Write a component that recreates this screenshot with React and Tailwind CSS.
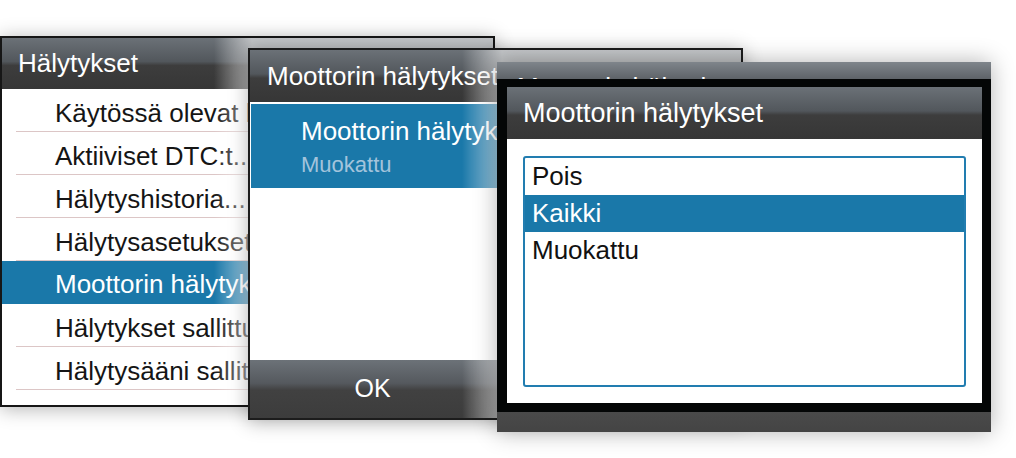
import React from "react";

const HEADER =
  "bg-[linear-gradient(to_bottom,#6b7177_0%,#52575c_46%,#3d3d3d_54%,#363636_100%)]";

const mainRows = [
  "Käytössä olevat hälytykset",
  "Aktiiviset DTC:t...",
  "Hälytyshistoria...",
  "Hälytysasetukset...",
  "Moottorin hälytykset",
  "Hälytykset sallittu",
  "Hälytysääni sallittu",
];

const options = ["Pois", "Kaikki", "Muokattu"];

const AlarmsWindow = () => (
  <div className="absolute left-0 top-[36px] z-10 flex h-[371px] w-[495px] flex-col overflow-hidden border-2 border-[#161616] bg-white shadow-[0_2px_18px_rgba(0,0,0,0.3)]">
    <div className={`flex h-[51px] shrink-0 items-center pl-4 text-[26px] text-white ${HEADER}`}>
      Hälytykset
    </div>
    <ul>
      {mainRows.map((row, i) =>
        i === 4 ? (
          <li
            key={row}
            className="flex h-[43px] items-center whitespace-nowrap bg-[#1a78a9] pl-[53px] pt-[4px] text-[26px] text-white"
          >
            {row}
          </li>
        ) : (
          <li
            key={row}
            className="ml-[14px] flex h-[43px] items-center whitespace-nowrap border-b border-[#dcc6c6] pl-[39px] pt-[6px] text-[26px] text-[#151515]"
          >
            {row}
          </li>
        )
      )}
    </ul>
    <div className="pointer-events-none absolute inset-y-0 left-[212px] right-0 bg-[linear-gradient(to_right,rgba(255,255,255,0)_0px,rgba(255,255,255,0.6)_38px)]" />
  </div>
);

const EngineWindow = () => (
  <div className="absolute left-[248px] top-[48px] z-20 flex h-[372px] w-[495px] flex-col overflow-hidden border-2 border-[#1c1c1c] bg-white shadow-[0_2px_18px_rgba(0,0,0,0.3)]">
    <div className={`flex h-[52px] shrink-0 items-center whitespace-nowrap pl-[17px] text-[26px] text-white ${HEADER}`}>
      Moottorin hälytykset
    </div>
    <div className="mt-[2px] ml-px flex h-[84px] shrink-0 flex-col bg-[#1a78a9] pl-[50px] pt-[12px] whitespace-nowrap">
      <span className="text-[26px] leading-[30px] text-white">Moottorin hälytykset</span>
      <span className="mt-[6px] text-[22px] leading-[26px] text-[#a3c4dc]">Muokattu</span>
    </div>
    <div className="flex-1" />
    <div className="flex h-[58px] shrink-0 bg-[linear-gradient(to_bottom,#6c7278_0%,#55595e_40%,#414141_52%,#3c3c3c_100%)]">
      <div className="flex w-[245px] items-center justify-center text-[25px] text-white">OK</div>
    </div>
    <div className="pointer-events-none absolute inset-y-0 left-[212px] right-0 bg-[linear-gradient(to_right,rgba(255,255,255,0)_0px,rgba(255,255,255,0.6)_40px)]" />
  </div>
);

const SelectWindow = () => (
  <div className="absolute left-[497px] top-[62px] z-30 flex h-[370px] w-[494px] flex-col overflow-hidden shadow-[0_0_22px_rgba(0,0,0,0.3)]">
    <div className="h-[17px] shrink-0 overflow-hidden bg-[linear-gradient(to_bottom,#7f858b,#5e6368)] pl-[20px] pt-[12px]">
      <div className="whitespace-nowrap text-[26px] leading-none text-white">Moottorin hälytykset</div>
    </div>
    <div className="flex h-[333px] shrink-0 flex-col bg-[#040606] pb-[9px] pl-[10px] pr-[9px] pt-[8px]">
      <div className={`flex h-[52px] shrink-0 items-center pl-4 text-[27px] text-white ${HEADER}`}>
        Moottorin hälytykset
      </div>
      <div className="flex flex-1 flex-col bg-white px-4 pb-4 pt-[17px]">
        <ul className="flex-1 rounded-[3px] border-2 border-[#227db0]">
          {options.map((opt) => (
            <li
              key={opt}
              className={`flex h-[37px] items-center pl-[7px] text-[26px] ${
                opt === "Kaikki" ? "bg-[#1a78a9] text-white" : "text-[#111]"
              }`}
            >
              {opt}
            </li>
          ))}
        </ul>
      </div>
    </div>
    <div className="flex-1 bg-[linear-gradient(to_bottom,#4a4a4a,#444444)]" />
  </div>
);

export default function App() {
  return (
    <div className="relative h-[458px] w-[1016px] overflow-hidden bg-white font-['Liberation_Sans',Arial,sans-serif]">
      <AlarmsWindow />
      <EngineWindow />
      <SelectWindow />
    </div>
  );
}
